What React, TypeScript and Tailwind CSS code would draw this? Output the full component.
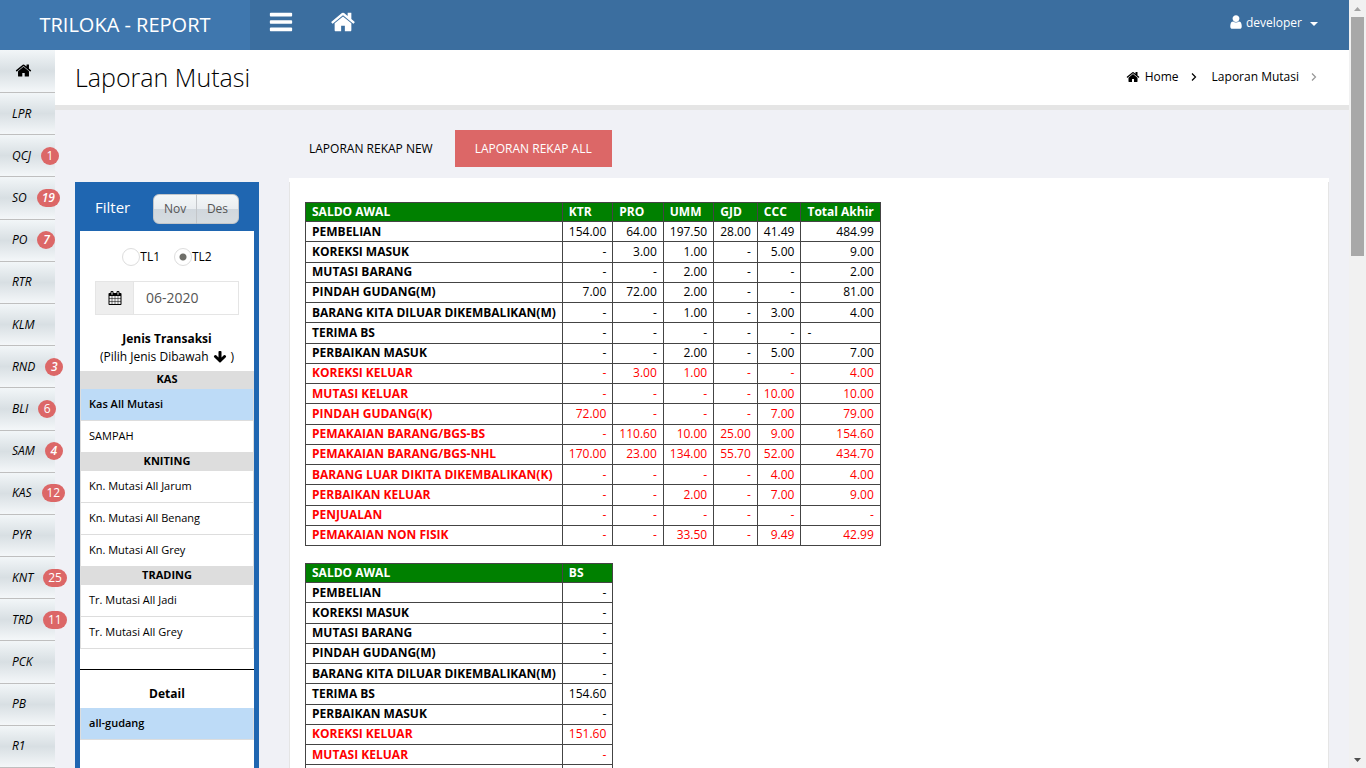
import React from "react";

const FA = {
  home: "M1472 992v480q0 26-19 45t-45 19h-384v-384h-256v384h-384q-26 0-45-19t-19-45v-480q0-1 .5-3t.5-3l575-474 575 474q1 2 1 6zm223-69l-62 74q-8 9-21 11h-3q-13 0-21-7l-692-577-692 577q-12 8-24 7-13-2-21-11l-62-74q-8-10-7-23.5t11-21.5l719-599q32-26 76-26t76 26l244 204v-195q0-14 9-23t23-9h192q14 0 23 9t9 23v408l219 182q10 8 11 21.5t-7 23.5z",
  bars: "M1664 1344v128q0 26-19 45t-45 19h-1408q-26 0-45-19t-19-45v-128q0-26 19-45t45-19h1408q26 0 45 19t19 45zm0-512v128q0 26-19 45t-45 19h-1408q-26 0-45-19t-19-45v-128q0-26 19-45t45-19h1408q26 0 45 19t19 45zm0-512v128q0 26-19 45t-45 19h-1408q-26 0-45-19t-19-45v-128q0-26 19-45t45-19h1408q26 0 45 19t19 45z",
  user: "M1536 1399q0 109-62.5 187t-150.5 78h-854q-88 0-150.5-78t-62.5-187q0-85 8.5-160.5t31.5-152 58.5-131 94-89 134.5-34.5q131 128 313 128t313-128q76 0 134.5 34.5t94 89 58.5 131 31.5 152 8.5 160.5zm-256-887q0 159-112.5 271.5t-271.5 112.5-271.5-112.5-112.5-271.5 112.5-271.5 271.5-112.5 271.5 112.5 112.5 271.5z",
  calendar: "M192 1664h288v-288h-288v288zm352 0h320v-288h-320v288zm-352-352h288v-320h-288v320zm352 0h320v-320h-320v320zm-352-384h288v-288h-288v288zm736 736h320v-288h-320v288zm-384-736h320v-288h-320v288zm768 736h288v-288h-288v288zm-384-352h320v-320h-320v320zm-352-864v-288q0-13-9.5-22.5t-22.5-9.5h-64q-13 0-22.5 9.5t-9.5 22.5v288q0 13 9.5 22.5t22.5 9.5h64q13 0 22.5-9.5t9.5-22.5zm736 864h288v-320h-288v320zm-384-384h320v-288h-320v288zm384 0h288v-288h-288v288zm32-480v-288q0-13-9.5-22.5t-22.5-9.5h-64q-13 0-22.5 9.5t-9.5 22.5v288q0 13 9.5 22.5t22.5 9.5h64q13 0 22.5-9.5t9.5-22.5zm384-64v1280q0 52-38 90t-90 38h-1408q-52 0-90-38t-38-90v-1280q0-52 38-90t90-38h128v-96q0-66 47-113t113-47h64q66 0 113 47t47 113v96h384v-96q0-66 47-113t113-47h64q66 0 113 47t47 113v96h128q52 0 90 38t38 90z",
  arrowDown: "M1675 832q0 53-37 90l-651 652q-39 37-91 37-53 0-90-37l-651-652q-38-36-38-90 0-53 38-91l74-75q39-37 91-37 53 0 90 37l294 294v-704q0-52 38-90t90-38h128q52 0 90 38t38 90v704l294-294q37-37 90-37 52 0 91 37l75 75q37 39 37 91z",
};

function Icon({ name, className }: { name: keyof typeof FA; className: string }) {
  return (
    <svg viewBox="0 0 1792 1792" fill="currentColor" aria-hidden="true" className={className}>
      <path d={FA[name]} />
    </svg>
  );
}

function Chevron({ className }: { className: string }) {
  return (
    <svg viewBox="0 0 6 10" fill="none" stroke="currentColor" strokeWidth="1.25" aria-hidden="true" className={className}>
      <path d="M1 1.5 4.5 5 1 8.5" />
    </svg>
  );
}

type MenuEntry = { label: string; count?: number; style?: string };

const menu: MenuEntry[] = [
  { label: "LPR" },
  { label: "QCJ", count: 1, style: "not-italic" },
  { label: "SO", count: 19, style: "font-semibold italic" },
  { label: "PO", count: 7, style: "font-semibold italic" },
  { label: "RTR" },
  { label: "KLM" },
  { label: "RND", count: 3, style: "font-semibold italic" },
  { label: "BLI", count: 6, style: "not-italic" },
  { label: "SAM", count: 4, style: "font-semibold italic" },
  { label: "KAS", count: 12, style: "not-italic" },
  { label: "PYR" },
  { label: "KNT", count: 25, style: "not-italic" },
  { label: "TRD", count: 11, style: "not-italic" },
  { label: "PCK" },
  { label: "PB" },
  { label: "R1" },
];

const menuRow =
  "flex items-center gap-[10px] border-b border-[#bfbfbf] bg-linear-to-b from-[#f2f6f8] via-[#d8dfe3] to-[#f4f7f9] pl-3 text-xs whitespace-nowrap";

function Sidebar() {
  return (
    <nav className="relative z-10 flex w-[55px] shrink-0 flex-col">
      <a href="#home" aria-label="Home" className={"h-[43px] shrink-0 pb-[2px] " + menuRow}>
        <Icon name="home" className="ml-[3px] size-[17px] shrink-0" />
      </a>
      {menu.map((m) => (
        <a key={m.label} href={"#" + m.label} className={"min-h-[42px] flex-1 " + menuRow}>
          <span className="italic">{m.label}</span>
          {m.count !== undefined && (
            <span className={"flex h-[18px] min-w-[18px] shrink-0 items-center justify-center rounded-full bg-[#dc6767] px-[5px] text-xs text-white " + m.style}>
              {m.count}
            </span>
          )}
        </a>
      ))}
    </nav>
  );
}

const groups = [
  { title: "KAS", items: ["Kas All Mutasi", "SAMPAH"] },
  { title: "KNITING", items: ["Kn. Mutasi All Jarum", "Kn. Mutasi All Benang", "Kn. Mutasi All Grey"] },
  { title: "TRADING", items: ["Tr. Mutasi All Jadi", "Tr. Mutasi All Grey"] },
];

function FilterItem({ label, active }: { label: string; active?: boolean }) {
  return (
    <a
      href="#filter"
      className={
        active
          ? "flex h-8 items-center border border-t-0 border-[#ddd] bg-[#bddbf7] px-2 text-[11px] font-semibold"
          : "flex h-8 items-center border border-t-0 border-[#ddd] px-2 text-[11px]"
      }
    >
      {label}
    </a>
  );
}

function Radio({ label, checked }: { label: string; checked?: boolean }) {
  return (
    <label className="flex items-center">
      <input
        type="radio"
        name="site"
        defaultChecked={checked}
        className="size-[18px] appearance-none rounded-full border border-[#ddd] bg-white checked:bg-[radial-gradient(circle,#6f6f6a_3px,transparent_4px)]"
      />
      {label}
    </label>
  );
}

function Filter() {
  const half = "border border-[#c3c6c9] bg-[linear-gradient(#f4f7f8_0%,#e9edf0_50%,#d0d7dd_51%,#d6dce0_100%)] text-xs text-[#555]";
  return (
    <aside className="flex w-[184px] shrink-0 flex-col border-x-[5px] border-[#1f66b1] bg-white">
      <div className="flex h-[49px] shrink-0 items-center justify-between bg-[#1f66b1] px-[15px]">
        <h2 className="text-[15px] text-white">Filter</h2>
        <div className="mt-1 flex h-[30px]">
          <button type="button" className={"w-11 rounded-l-md " + half}>Nov</button>
          <button type="button" className={"-ml-px w-[43px] rounded-r-md " + half}>Des</button>
        </div>
      </div>
      <div className="mt-[17px] flex justify-center gap-[14px] text-xs">
        <Radio label="TL1" />
        <Radio label="TL2" checked />
      </div>
      <div className="mx-[15px] mt-[15px] flex h-[34px] border border-[#e5e5e5]">
        <label htmlFor="period" aria-label="Periode" className="flex w-[38px] shrink-0 items-center justify-center border-r border-[#e5e5e5] bg-[#eee]">
          <Icon name="calendar" className="size-[14px]" />
        </label>
        <input id="period" type="text" defaultValue="06-2020" className="w-full min-w-0 px-3 text-sm text-[#555] outline-none" />
      </div>
      <div className="mt-[15px] mb-[5px] text-center text-xs leading-[18px]">
        <p className="font-bold">Jenis Transaksi</p>
        <p className="flex items-center justify-center">
          (Pilih Jenis Dibawah
          <Icon name="arrowDown" className="mx-1 size-[14px]" />)
        </p>
      </div>
      {groups.map((g) => (
        <section key={g.title}>
          <h3 className="h-[18px] bg-[#ddd] text-center text-[11px] leading-4 font-bold">{g.title}</h3>
          {g.items.map((item) => (
            <FilterItem key={item} label={item} active={item === "Kas All Mutasi"} />
          ))}
        </section>
      ))}
      <hr className="mt-5 border-black" />
      <h3 className="mt-[14px] mb-1 text-center text-xs leading-5 font-bold">Detail</h3>
      <FilterItem label="all-gudang" active />
    </aside>
  );
}

type Row = { label: string; values: string[]; out?: boolean };

const columns = ["KTR", "PRO", "UMM", "GJD", "CCC", "Total Akhir"];

const stock: Row[] = [
  { label: "PEMBELIAN", values: ["154.00", "64.00", "197.50", "28.00", "41.49", "484.99"] },
  { label: "KOREKSI MASUK", values: ["-", "3.00", "1.00", "-", "5.00", "9.00"] },
  { label: "MUTASI BARANG", values: ["-", "-", "2.00", "-", "-", "2.00"] },
  { label: "PINDAH GUDANG(M)", values: ["7.00", "72.00", "2.00", "-", "-", "81.00"] },
  { label: "BARANG KITA DILUAR DIKEMBALIKAN(M)", values: ["-", "-", "1.00", "-", "3.00", "4.00"] },
  { label: "TERIMA BS", values: ["-", "-", "-", "-", "-", "-"] },
  { label: "PERBAIKAN MASUK", values: ["-", "-", "2.00", "-", "5.00", "7.00"] },
  { label: "KOREKSI KELUAR", values: ["-", "3.00", "1.00", "-", "-", "4.00"], out: true },
  { label: "MUTASI KELUAR", values: ["-", "-", "-", "-", "10.00", "10.00"], out: true },
  { label: "PINDAH GUDANG(K)", values: ["72.00", "-", "-", "-", "7.00", "79.00"], out: true },
  { label: "PEMAKAIAN BARANG/BGS-BS", values: ["-", "110.60", "10.00", "25.00", "9.00", "154.60"], out: true },
  { label: "PEMAKAIAN BARANG/BGS-NHL", values: ["170.00", "23.00", "134.00", "55.70", "52.00", "434.70"], out: true },
  { label: "BARANG LUAR DIKITA DIKEMBALIKAN(K)", values: ["-", "-", "-", "-", "4.00", "4.00"], out: true },
  { label: "PERBAIKAN KELUAR", values: ["-", "-", "2.00", "-", "7.00", "9.00"], out: true },
  { label: "PENJUALAN", values: ["-", "-", "-", "-", "-", "-"], out: true },
  { label: "PEMAKAIAN NON FISIK", values: ["-", "-", "33.50", "-", "9.49", "42.99"], out: true },
];

const bsValues: Record<string, string> = { "TERIMA BS": "154.60", "KOREKSI KELUAR": "151.60" };
const bsStock: Row[] = stock.map((r) => ({ ...r, values: [bsValues[r.label] ?? "-"] }));

function Report({ heads, rows }: { heads: string[]; rows: Row[] }) {
  const cell = "border border-[#444] px-[6px] py-0";
  return (
    <table className="h-[344px] shrink-0 border-collapse text-xs leading-[18px] whitespace-nowrap">
      <thead>
        <tr className="bg-[#008000] text-left text-white">
          <th className={cell}>SALDO AWAL</th>
          {heads.map((h) => (
            <th key={h} className={cell}>{h}</th>
          ))}
        </tr>
      </thead>
      <tbody>
        {rows.map((r) => (
          <tr key={r.label} className={r.out ? "text-[#f00]" : "text-black"}>
            <th scope="row" className={cell + " text-left"}>{r.label}</th>
            {r.values.map((v, i) => (
              <td key={i} className={cell + (r.label === "TERIMA BS" && i === 5 ? " text-left" : " text-right")}>{v}</td>
            ))}
          </tr>
        ))}
      </tbody>
    </table>
  );
}

function Scrollbar() {
  return (
    <div aria-hidden="true" className="flex w-[17px] shrink-0 flex-col items-center bg-[#f1f1f1]">
      <svg viewBox="0 0 17 17" className="size-[17px] shrink-0">
        <path d="M5 11h7L8.500 7z" fill="#a3a3a3" />
      </svg>
      <div className="h-[239px] w-[13px] bg-[#a8a8a8]" />
      <svg viewBox="0 0 17 17" className="mt-auto size-[17px] shrink-0">
        <path d="M5 7h7L8.500 11z" fill="#505050" />
      </svg>
    </div>
  );
}

export default function App() {
  return (
    <div className="flex h-screen overflow-hidden bg-[#f0f1f6] font-['Open_Sans',sans-serif] text-xs text-black">
      <div className="flex min-w-0 flex-1 flex-col">
        <header className="flex h-[50px] shrink-0 bg-[#3b6e9f] text-white">
          <a href="#top" className="flex w-[250px] shrink-0 items-center justify-center bg-[#3f77ae] text-xl">TRILOKA - REPORT</a>
          <button type="button" aria-label="Menu" className="ml-[18px] flex items-center pb-[6px]">
            <Icon name="bars" className="size-[26px]" />
          </button>
          <a href="#home" aria-label="Home" className="ml-9 flex items-center pb-[6px]">
            <Icon name="home" className="size-[26px]" />
          </a>
          <button type="button" className="mr-[31px] ml-auto flex items-center pb-1">
            <Icon name="user" className="mb-[2px] size-4" />
            <span className="ml-[2px]">developer</span>
            <svg viewBox="0 0 8 4" className="mt-[2px] ml-2 h-1 w-2" aria-hidden="true">
              <path d="M0 0h8L4 4z" fill="currentColor" />
            </svg>
          </button>
        </header>
        <div className="flex min-h-0 flex-1">
          <Sidebar />
          <div className="flex min-w-0 flex-1 flex-col">
            <div className="flex h-[60px] shrink-0 items-center justify-between border-b-[5px] border-[#e5e5e5] bg-white pr-8 pl-5">
              <h1 className="text-[25px] font-light">Laporan Mutasi</h1>
              <nav aria-label="Breadcrumb" className="flex items-center pb-[2px]">
                <Icon name="home" className="size-[14px]" />
                <a href="#home" className="ml-[5px]">Home</a>
                <Chevron className="ml-3 h-[10px] w-[6px]" />
                <a href="#mutasi" className="ml-[15px]">Laporan Mutasi</a>
                <Chevron className="ml-3 h-[10px] w-[6px] text-[#999]" />
              </nav>
            </div>
            <div className="flex min-h-0 flex-1 px-5">
              <div className="flex pt-[72px]">
                <Filter />
              </div>
              <main className="ml-[30px] flex min-w-0 flex-1 flex-col pt-5">
                <div className="flex shrink-0 gap-[2px]">
                  <button type="button" className="h-[37px] px-5">LAPORAN REKAP NEW</button>
                  <button type="button" className="h-[37px] bg-[#dc6767] px-5 text-white">LAPORAN REKAP ALL</button>
                </div>
                <div className="mt-[11px] h-1 shrink-0 bg-white" />
                <div className="flex min-h-0 flex-1 flex-col items-start gap-[17px] overflow-hidden border-x border-[#e5e5e5] bg-white pt-5 pl-[15px]">
                  <Report heads={columns} rows={stock} />
                  <Report heads={["BS"]} rows={bsStock} />
                </div>
              </main>
            </div>
          </div>
        </div>
      </div>
      <Scrollbar />
    </div>
  );
}
